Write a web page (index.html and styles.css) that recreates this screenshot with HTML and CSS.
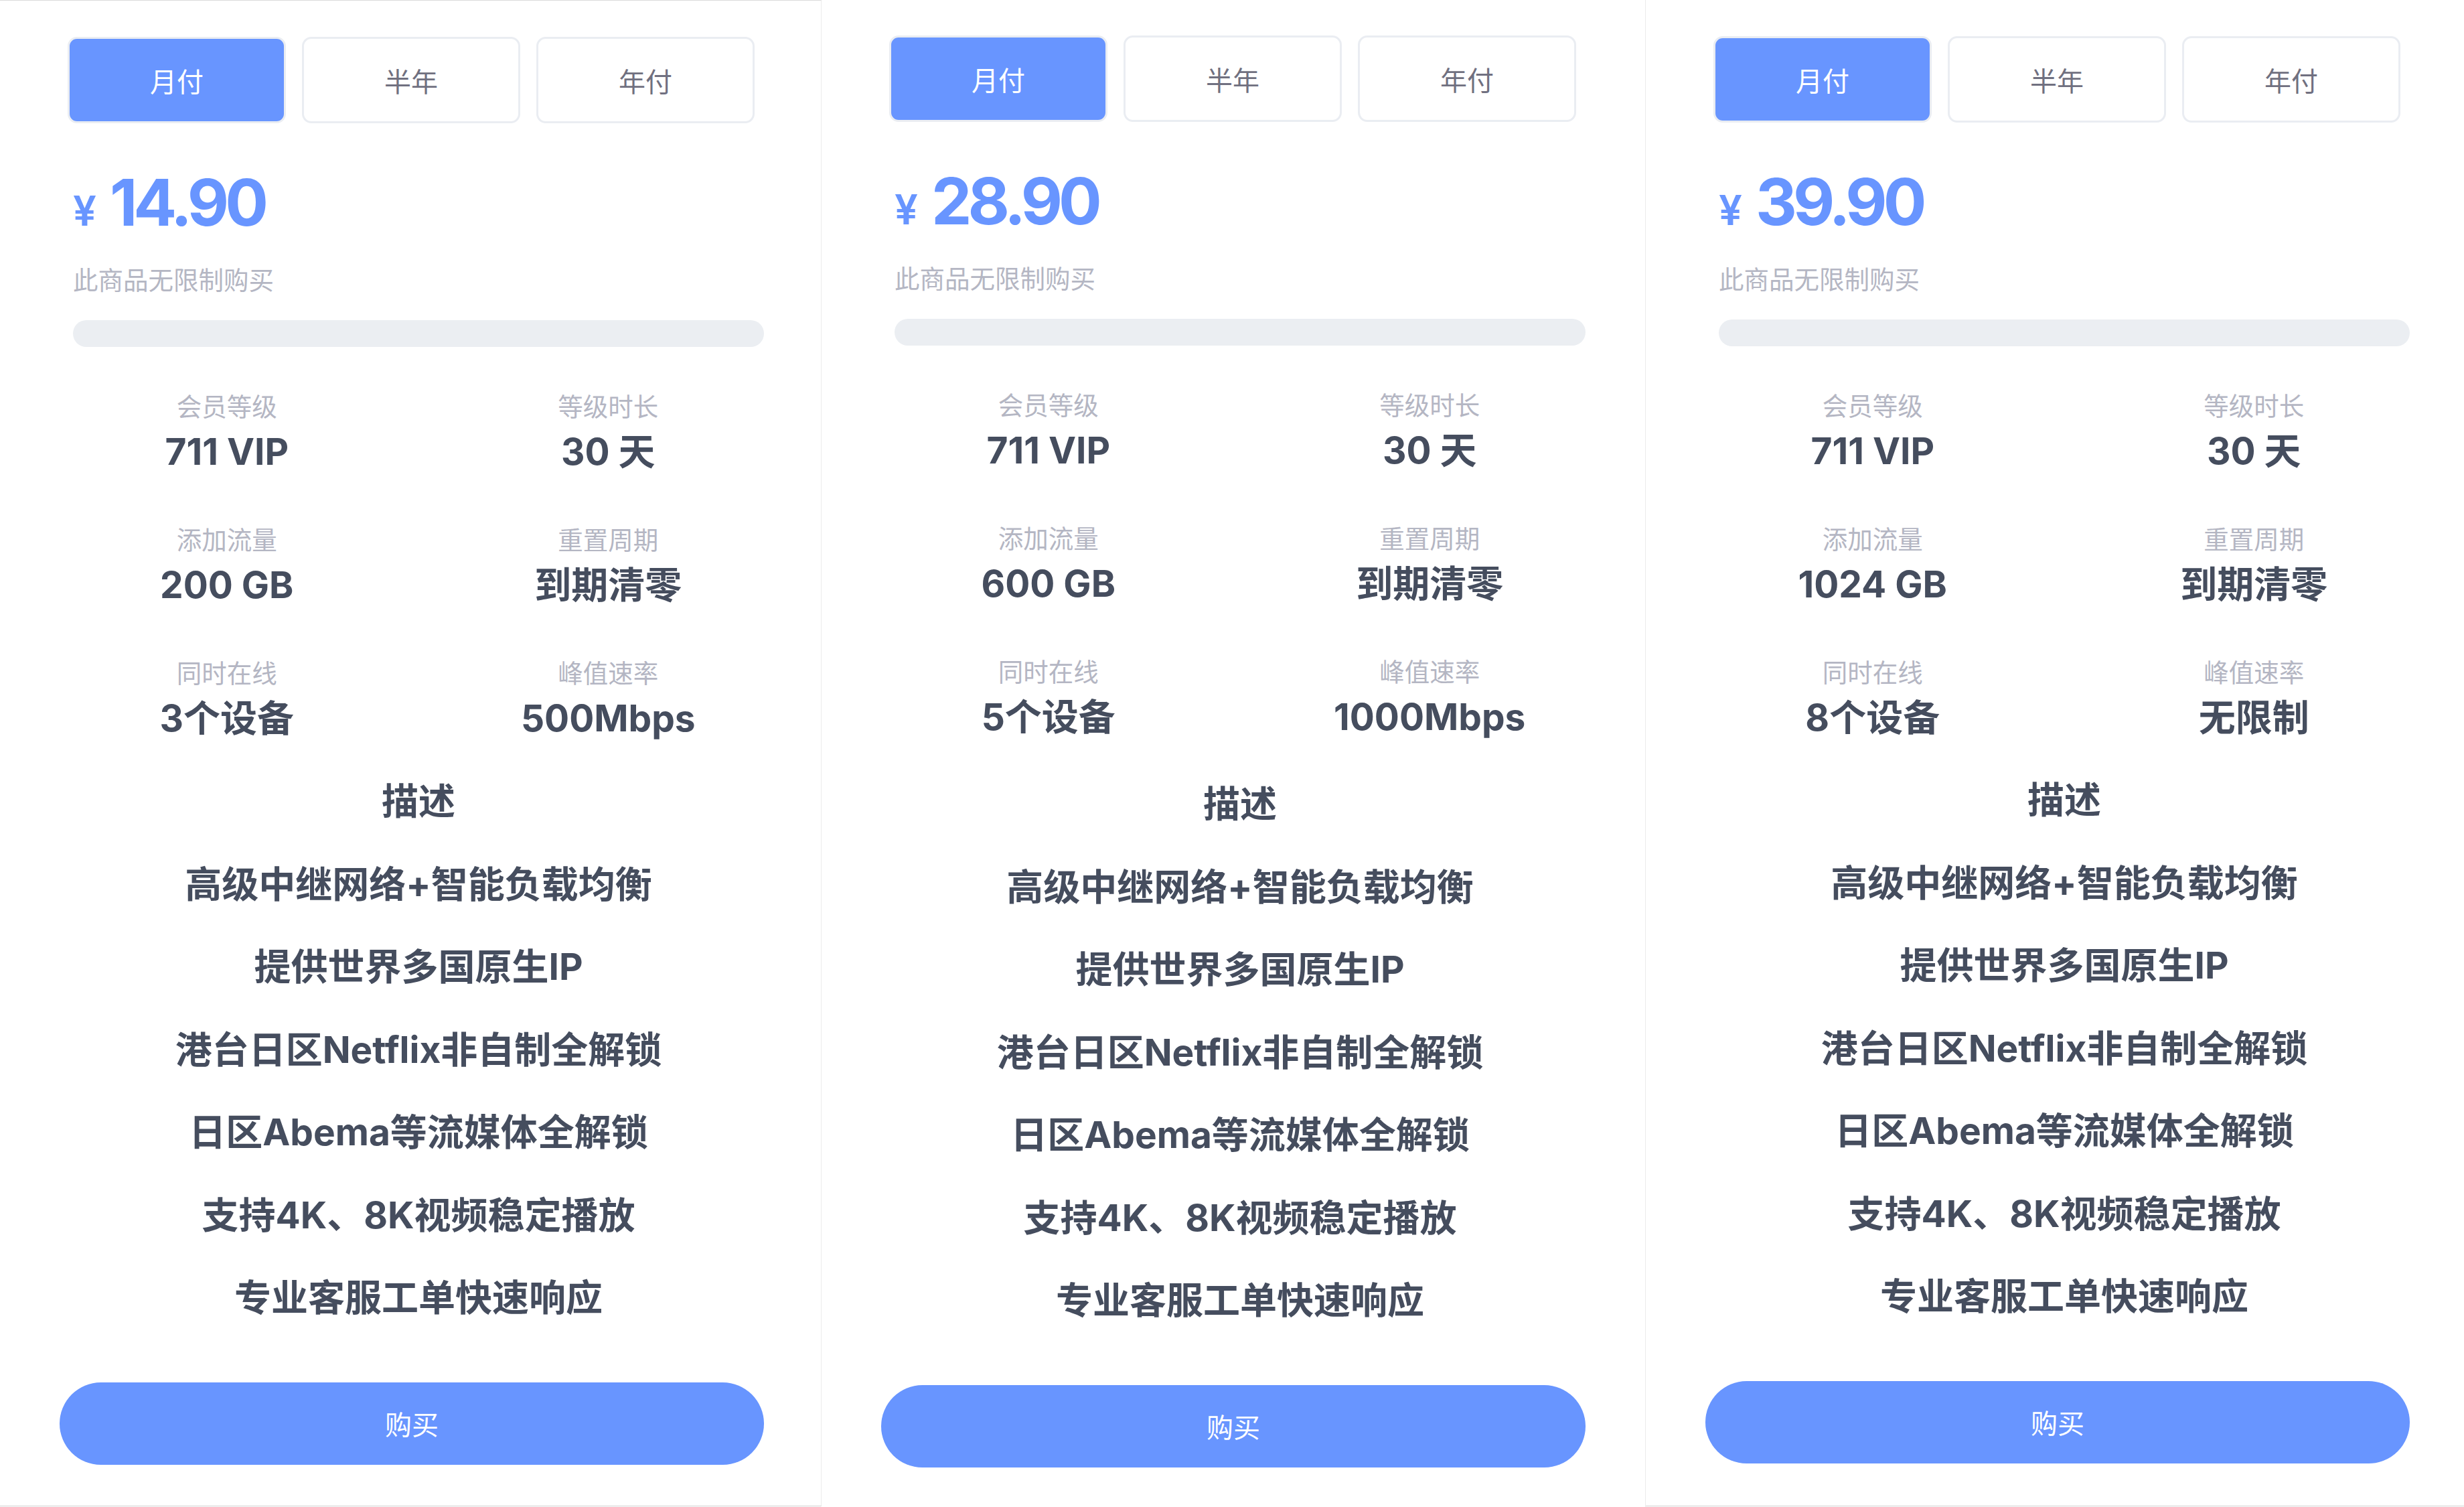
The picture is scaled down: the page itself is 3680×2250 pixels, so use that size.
FILE: index.html
```html
<!DOCTYPE html>
<html lang="zh-CN">
<head>
    <meta charset="UTF-8">
    <meta name="viewport" content="width=device-width, initial-scale=1.0">
    <title>套餐</title>
    <link rel="stylesheet" href="styles.css">
</head>
<body>
    <div class="plans">
        <div class="card first">
            <div class="tabs">
                <div class="tab active">月付</div>
                <div class="tab">半年</div>
                <div class="tab">年付</div>
            </div>
            <div class="body">
                <div class="price"><span class="cur">¥</span><span class="num">14.90</span></div>
                <div class="note">此商品无限制购买</div>
                <div class="bar"></div>
                <div class="stats">
                    <div class="stat"><div class="label">会员等级</div><div class="value">711 VIP</div></div>
                    <div class="stat"><div class="label">等级时长</div><div class="value">30 天</div></div>
                    <div class="stat"><div class="label">添加流量</div><div class="value">200 GB</div></div>
                    <div class="stat"><div class="label">重置周期</div><div class="value">到期清零</div></div>
                    <div class="stat"><div class="label">同时在线</div><div class="value">3个设备</div></div>
                    <div class="stat"><div class="label">峰值速率</div><div class="value">500Mbps</div></div>
                </div>
                <div class="desc">
                    <p>描述</p>
                    <p>高级中继网络+智能负载均衡</p>
                    <p>提供世界多国原生IP</p>
                    <p>港台日区Netflix非自制全解锁</p>
                    <p>日区Abema等流媒体全解锁</p>
                    <p>支持4K、8K视频稳定播放</p>
                    <p>专业客服工单快速响应</p>
                </div>
            </div>
            <button class="buy">购买</button>
        </div>

        <div class="card mid">
            <div class="tabs">
                <div class="tab active">月付</div>
                <div class="tab">半年</div>
                <div class="tab">年付</div>
            </div>
            <div class="body">
                <div class="price"><span class="cur">¥</span><span class="num">28.90</span></div>
                <div class="note">此商品无限制购买</div>
                <div class="bar"></div>
                <div class="stats">
                    <div class="stat"><div class="label">会员等级</div><div class="value">711 VIP</div></div>
                    <div class="stat"><div class="label">等级时长</div><div class="value">30 天</div></div>
                    <div class="stat"><div class="label">添加流量</div><div class="value">600 GB</div></div>
                    <div class="stat"><div class="label">重置周期</div><div class="value">到期清零</div></div>
                    <div class="stat"><div class="label">同时在线</div><div class="value">5个设备</div></div>
                    <div class="stat"><div class="label">峰值速率</div><div class="value">1000Mbps</div></div>
                </div>
                <div class="desc">
                    <p>描述</p>
                    <p>高级中继网络+智能负载均衡</p>
                    <p>提供世界多国原生IP</p>
                    <p>港台日区Netflix非自制全解锁</p>
                    <p>日区Abema等流媒体全解锁</p>
                    <p>支持4K、8K视频稳定播放</p>
                    <p>专业客服工单快速响应</p>
                </div>
            </div>
            <button class="buy">购买</button>
        </div>

        <div class="card last">
            <div class="tabs">
                <div class="tab active">月付</div>
                <div class="tab">半年</div>
                <div class="tab">年付</div>
            </div>
            <div class="body">
                <div class="price"><span class="cur">¥</span><span class="num">39.90</span></div>
                <div class="note">此商品无限制购买</div>
                <div class="bar"></div>
                <div class="stats">
                    <div class="stat"><div class="label">会员等级</div><div class="value">711 VIP</div></div>
                    <div class="stat"><div class="label">等级时长</div><div class="value">30 天</div></div>
                    <div class="stat"><div class="label">添加流量</div><div class="value">1024 GB</div></div>
                    <div class="stat"><div class="label">重置周期</div><div class="value">到期清零</div></div>
                    <div class="stat"><div class="label">同时在线</div><div class="value">8个设备</div></div>
                    <div class="stat"><div class="label">峰值速率</div><div class="value">无限制</div></div>
                </div>
                <div class="desc">
                    <p>描述</p>
                    <p>高级中继网络+智能负载均衡</p>
                    <p>提供世界多国原生IP</p>
                    <p>港台日区Netflix非自制全解锁</p>
                    <p>日区Abema等流媒体全解锁</p>
                    <p>支持4K、8K视频稳定播放</p>
                    <p>专业客服工单快速响应</p>
                </div>
            </div>
            <button class="buy">购买</button>
        </div>
    </div>
</body>
</html>
```
FILE: styles.css
```css
* { box-sizing: border-box; }
body { margin: 0; background: #fff; font-family: Inter, "Noto Sans CJK SC", sans-serif; overflow: hidden; }

.plans { display: flex; align-items: flex-start; height: 2250px; }

.card { flex: none; background: #fff; border-right: 1px solid #ececec; padding-top: 55px; }
.card.first { width: 1227px; height: 2249px; padding-top: 54px; border-top: 1px solid #dadada; border-bottom: 1px solid #d2d2d2; }
.card.mid { width: 1231px; height: 2320px; margin-top: -2px; }
.card.last { width: 1230px; height: 2250px; margin-top: -1px; border-bottom: 1px solid #d2d2d2; }

.tabs { display: flex; gap: 24px; width: 1026px; margin-left: 101px; }
.tab { flex: 1; height: 129px; display: flex; align-items: center; justify-content: center; background: #fff; border: 3px solid #eaedf2; border-radius: 14px; font-size: 40px; color: #707080; }
.tab.active { background: #6895ff; color: #fff; }

.body { width: 1032px; margin-left: 109px; }

.price { display: flex; align-items: baseline; margin-top: 68px; color: #6895ff; }
.price .cur { font-size: 62px; font-weight: 600; line-height: 62px; margin-right: 20px; }
.price .num { font-size: 96px; font-weight: 700; line-height: 100px; letter-spacing: -6px; }

.note { margin-top: 42px; font-size: 37.5px; line-height: 50px; color: #b4b6c3; }
.bar { height: 40px; margin-top: 34px; border-radius: 20px; background: #ebeef2; }

.stats { display: grid; grid-template-columns: 1fr 1fr; row-gap: 75px; margin: 65px -52px 0 -55px; text-align: center; }
.stat .label { font-size: 37.5px; line-height: 50px; color: #b4b6c3; }
.stat .value { margin-top: 8px; font-size: 55px; font-weight: 700; line-height: 66px; color: #454d5e; }

.desc { margin-top: 30px; text-align: center; }
.desc p { margin: 0; font-size: 55px; font-weight: 650; line-height: 123.5px; color: #454d5e; }
.card.mid .desc { margin-top: 36px; }
.card.last .desc { margin-top: 29px; }

.buy { display: block; width: 1052px; height: 123px; margin: 64px 0 0 89px; border: 0; border-radius: 62px; background: #6895ff; color: #fff; font-family: inherit; font-size: 40px; cursor: pointer; }
```
